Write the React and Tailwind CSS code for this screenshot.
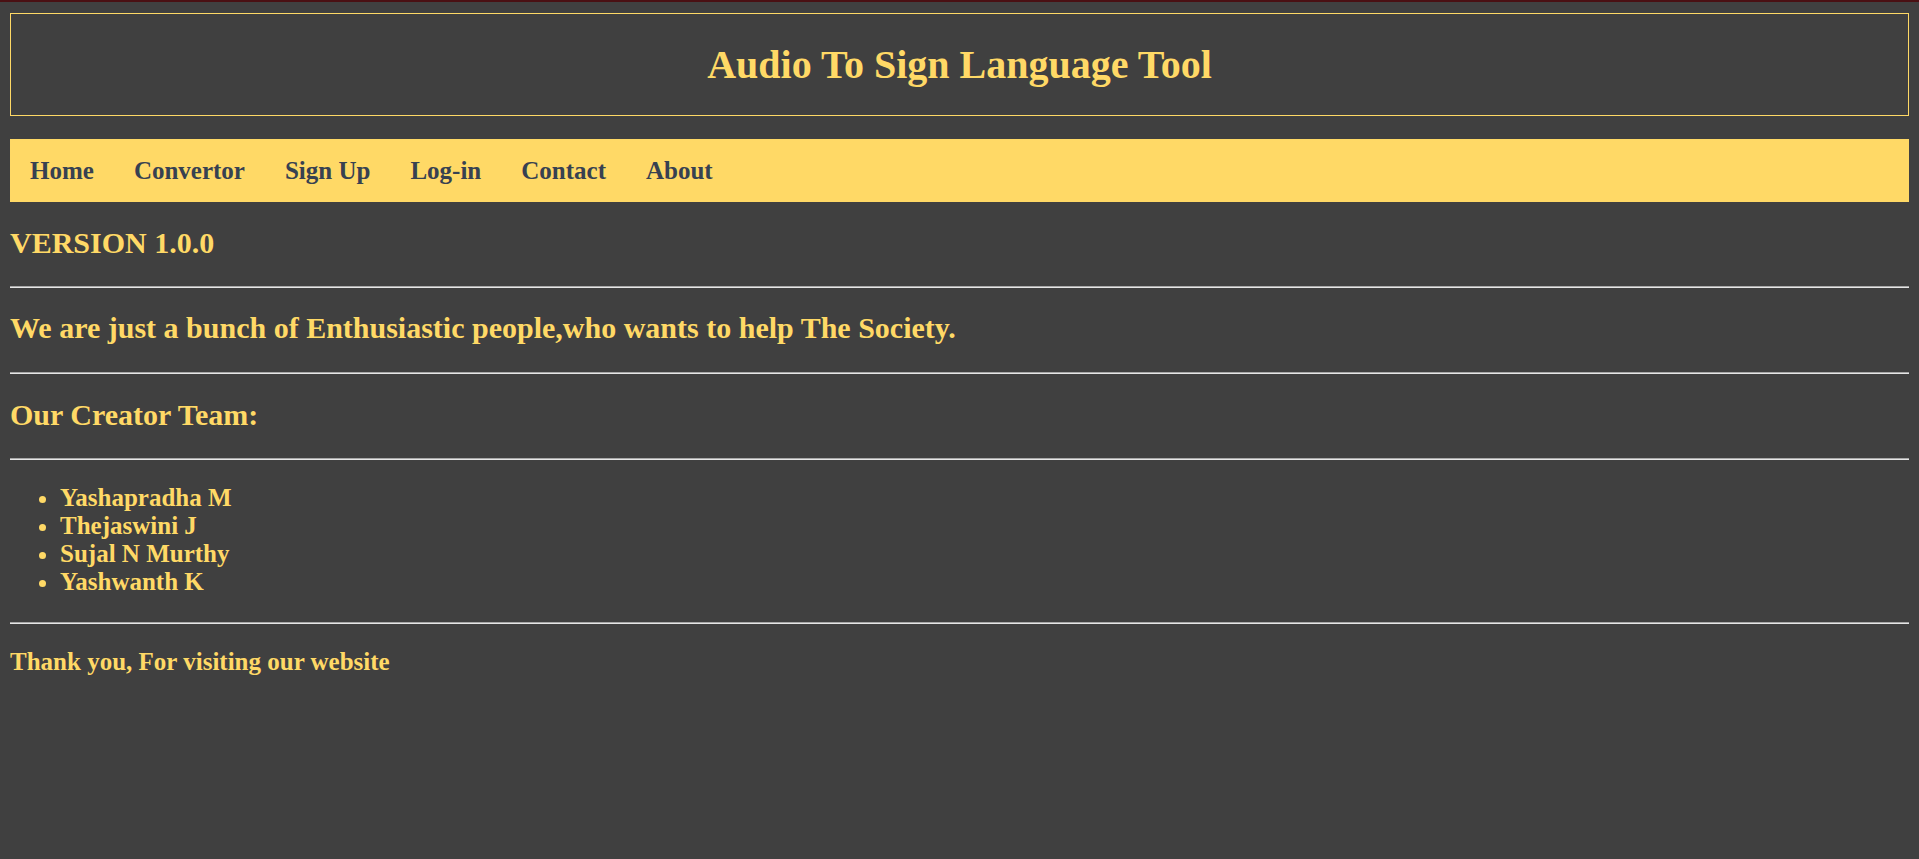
import React from 'react';

const links = ['Home', 'Convertor', 'Sign Up', 'Log-in', 'Contact', 'About'];
const team = ['Yashapradha M', 'Thejaswini J', 'Sujal N Murthy', 'Yashwanth K'];

function Rule({ className = '' }) {
  return <div className={`h-[2px] border-t border-[#a8a8a8] bg-[#e6e6e6] ${className}`} />;
}

export default function App() {
  return (
    <div className="min-h-screen bg-[#404040] font-['Liberation_Serif','Times_New_Roman',serif] font-bold text-[#ffd966]">
      <div className="h-[2px] bg-[#4a1013]" />
      <div className="px-[10px] pb-10">
        {/* header */}
        <header className="mt-[11px] flex h-[103px] items-center justify-center border border-[#ffd966]">
          <h1 className="text-[40px] leading-[46px]">Audio To Sign Language Tool</h1>
        </header>

        {/* nav */}
        <nav className="mt-[23px] flex h-[63px] items-center bg-[#ffd966]">
          {links.map((l) => (
            <a key={l} href="#" className="px-5 text-[25px] leading-[29px] text-[#374151]">
              {l}
            </a>
          ))}
        </nav>

        <h2 className="mt-[24px] text-[30px] leading-[34px]">VERSION 1.0.0</h2>
        <Rule className="mt-[26px]" />
        <h2 className="mt-[23px] text-[30px] leading-[34px]">
          We are just a bunch of Enthusiastic people,who wants to help The Society.
        </h2>
        <Rule className="mt-[27px]" />
        <h2 className="mt-[24px] text-[30px] leading-[34px]">Our Creator Team:</h2>
        <Rule className="mt-[26px]" />
        <ul className="mt-[24px] list-disc pl-[50px] text-[25px] leading-[28px]">
          {team.map((t) => (
            <li key={t}>{t}</li>
          ))}
        </ul>
        <Rule className="mt-[26px]" />
        <p className="mt-[24px] text-[25px] leading-[28px]">Thank you, For visiting our website</p>
      </div>
    </div>
  );
}
